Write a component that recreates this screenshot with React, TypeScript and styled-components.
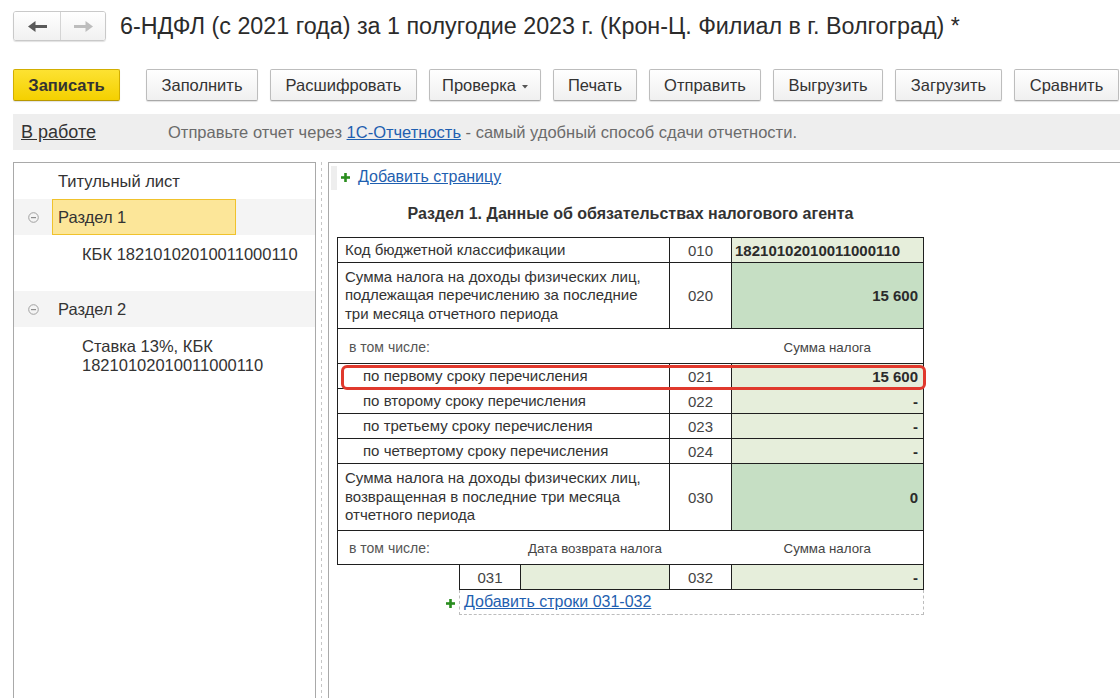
import React from 'react';
import styled, {createGlobalStyle} from 'styled-components';

const GlobalStyle = createGlobalStyle`
  html, body {
    margin: 0;
    padding: 0;
    background: #ffffff;
  }
  body {
    font-family: "Liberation Sans", Arial, sans-serif;
    color: #333333;
  }
`;

const ArrowLeft = ({color}: {color: string}) => (
  <svg width={19} height={11} viewBox="0 0 19 11">
    <polygon points="0,5.5 7.5,0 7.5,11" fill={color} />
    <rect x={6} y={4} width={13} height={3} fill={color} />
  </svg>
);

const ArrowRight = ({color}: {color: string}) => (
  <svg width={19} height={11} viewBox="0 0 19 11">
    <polygon points="19,5.5 11.5,0 11.5,11" fill={color} />
    <rect x={0} y={4} width={13} height={3} fill={color} />
  </svg>
);

const CollapseIcon = () => (
  <svg width={11} height={11} viewBox="0 0 11 11">
    <circle cx={5.5} cy={5.5} r={4.8} fill="none" stroke="#a0a0a0" strokeWidth={1} />
    <rect x={3} y={5} width={5} height={1.2} fill="#8c8c8c" />
  </svg>
);

const PlusIcon = () => (
  <svg width={9} height={9} viewBox="0 0 9 9">
    <rect x={3.2} y={0} width={2.6} height={9} fill="#2a8d1f" />
    <rect x={0} y={3.2} width={9} height={2.6} fill="#2a8d1f" />
  </svg>
);

const DropCaret = () => (
  <svg width={6} height={4} viewBox="0 0 6 4">
    <polygon points="0,0 6,0 3,3.5" fill="#555" />
  </svg>
);

type ButtonSpec = {label: string; width: number; primary?: boolean; caret?: boolean};

const buttons: ButtonSpec[] = [
  {label: 'Записать', width: 107, primary: true},
  {label: 'Заполнить', width: 112},
  {label: 'Расшифровать', width: 147},
  {label: 'Проверка', width: 112, caret: true},
  {label: 'Печать', width: 84},
  {label: 'Отправить', width: 112},
  {label: 'Выгрузить', width: 110},
  {label: 'Загрузить', width: 107},
  {label: 'Сравнить', width: 105},
];

const subRows = [
  {label: 'по первому сроку перечисления', code: '021', value: '15 600'},
  {label: 'по второму сроку перечисления', code: '022', value: '-'},
  {label: 'по третьему сроку перечисления', code: '023', value: '-'},
  {label: 'по четвертому сроку перечисления', code: '024', value: '-'},
];

export default function App() {
  return (
    <Page>
      <GlobalStyle />
      <Header>
        <NavGroup>
          <NavButton $divider>
            <ArrowLeft color="#595959" />
          </NavButton>
          <NavButton>
            <ArrowRight color="#bdbdbd" />
          </NavButton>
        </NavGroup>
        <Title>6-НДФЛ (с 2021 года) за 1 полугодие 2023 г. (Крон-Ц. Филиал в г. Волгоград) *</Title>
      </Header>

      <Toolbar>
        {buttons.map((b) => (
          <ToolButton key={b.label} $primary={b.primary} $width={b.width}>
            {b.label}
            {b.caret && (
              <CaretBox>
                <DropCaret />
              </CaretBox>
            )}
          </ToolButton>
        ))}
      </Toolbar>

      <InfoBar>
        <StatusLink>В работе</StatusLink>
        <InfoText>
          Отправьте отчет через <InfoLink>1С-Отчетность</InfoLink> - самый удобный способ сдачи отчетности.
        </InfoText>
      </InfoBar>

      <Main>
        <TreePanel>
          <TreeRow>
            <TreeLabel $indent={44}>Титульный лист</TreeLabel>
          </TreeRow>
          <TreeRow $shaded>
            <Toggle>
              <CollapseIcon />
            </Toggle>
            <SectionLabel $selected>Раздел 1</SectionLabel>
          </TreeRow>
          <TreeChild>КБК 18210102010011000110</TreeChild>
          <TreeRow $shaded>
            <Toggle>
              <CollapseIcon />
            </Toggle>
            <SectionLabel>Раздел 2</SectionLabel>
          </TreeRow>
          <TreeChild>
            Ставка 13%, КБК
            <br />
            18210102010011000110
          </TreeChild>
        </TreePanel>

        <Splitter />

        <FormPanel>
          <AddPageRow>
            <ScrollStub />
            <PlusIcon />
            <FormLink>Добавить страницу</FormLink>
          </AddPageRow>

          <Sheet>
            <Heading>Раздел 1. Данные об обязательствах налогового агента</Heading>
            <TableWrap>
              <Grid>
                <colgroup>
                  <col style={{width: 122}} />
                  <col style={{width: 61}} />
                  <col style={{width: 149}} />
                  <col style={{width: 62}} />
                  <col style={{width: 192}} />
                </colgroup>
                <tbody>
                  <Row $h={25}>
                    <Label colSpan={3}>Код бюджетной классификации</Label>
                    <Code>010</Code>
                    <Value $tone="light" $align="left">
                      18210102010011000110
                    </Value>
                  </Row>
                  <Row $h={66}>
                    <Label colSpan={3}>
                      Сумма налога на доходы физических лиц,
                      <br />
                      подлежащая перечислению за последние
                      <br />
                      три месяца отчетного периода
                    </Label>
                    <Code>020</Code>
                    <Value $tone="dark">15 600</Value>
                  </Row>
                  <Row $h={35}>
                    <Caption colSpan={4} $first>
                      <SmallLabel>в том числе:</SmallLabel>
                    </Caption>
                    <Caption $last $center>
                      <SubHead>Сумма налога</SubHead>
                    </Caption>
                  </Row>
                  {subRows.map((r) => (
                    <Row key={r.code} $h={25}>
                      <Label colSpan={3} $indent={25}>
                        {r.label}
                      </Label>
                      <Code>{r.code}</Code>
                      <Value $tone="light">{r.value}</Value>
                    </Row>
                  ))}
                  <Row $h={67}>
                    <Label colSpan={3}>
                      Сумма налога на доходы физических лиц,
                      <br />
                      возвращенная в последние три месяца
                      <br />
                      отчетного периода
                    </Label>
                    <Code>030</Code>
                    <Value $tone="dark">0</Value>
                  </Row>
                  <Row $h={34}>
                    <Caption colSpan={2} $first>
                      <SmallLabel>в том числе:</SmallLabel>
                    </Caption>
                    <Caption $center>
                      <SubHead>Дата возврата налога</SubHead>
                    </Caption>
                    <Caption />
                    <Caption $last $center>
                      <SubHead>Сумма налога</SubHead>
                    </Caption>
                  </Row>
                  <Row $h={25}>
                    <Blank />
                    <Code>031</Code>
                    <Value $tone="light" />
                    <Code>032</Code>
                    <Value $tone="light">-</Value>
                  </Row>
                  <Row $h={25}>
                    <Blank>
                      <PlusSlot>
                        <PlusIcon />
                      </PlusSlot>
                    </Blank>
                    <AddCell colSpan={4}>
                      <FormLink>Добавить строки 031-032</FormLink>
                    </AddCell>
                  </Row>
                </tbody>
              </Grid>
              <Highlight />
            </TableWrap>
          </Sheet>
        </FormPanel>
      </Main>
    </Page>
  );
}

const Page = styled.div`
  width: 1120px;
  height: 698px;
  overflow: hidden;
  display: flex;
  flex-direction: column;
  background: #ffffff;
  font-family: "Liberation Sans", Arial, sans-serif;
  color: #333333;
`;

const Header = styled.div`
  display: flex;
  align-items: center;
  padding: 11px 0 0 13px;
  height: 30px;
`;

const NavGroup = styled.div`
  display: flex;
  height: 30px;
  box-sizing: border-box;
  border: 1px solid #c9c9c9;
  border-radius: 3px;
  box-shadow: 0 1px 1px rgba(0, 0, 0, 0.12);
  overflow: hidden;
`;

const NavButton = styled.div<{$divider?: boolean}>`
  width: ${({$divider}) => ($divider ? '46px' : '44px')};
  display: flex;
  align-items: center;
  justify-content: center;
  background: linear-gradient(#ffffff, #f1f1f1);
  border-right: ${({$divider}) => ($divider ? '1px solid #d4d4d4' : 'none')};
`;

const Title = styled.div`
  margin-left: 14px;
  font-size: 23.3px;
  line-height: 30px;
  white-space: nowrap;
  color: #2b2b2b;
`;

const Toolbar = styled.div`
  display: flex;
  gap: 12px;
  padding-left: 13px;
  margin-top: 28px;
  height: 32px;
`;

const ToolButton = styled.div<{$primary?: boolean; $width: number}>`
  width: ${({$width}) => $width}px;
  margin-right: ${({$primary}) => ($primary ? '14px' : '0')};
  box-sizing: border-box;
  height: 32px;
  display: flex;
  align-items: center;
  justify-content: center;
  font-size: 16.5px;
  font-weight: ${({$primary}) => ($primary ? 'bold' : 'normal')};
  color: #333333;
  border-radius: 2px;
  border: 1px solid ${({$primary}) => ($primary ? '#d2ae00' : '#bdbdbd')};
  border-bottom-color: ${({$primary}) => ($primary ? '#b89800' : '#a9a9a9')};
  background: ${({$primary}) =>
    $primary ? 'linear-gradient(#fde232, #f4d000)' : 'linear-gradient(#ffffff, #f0f0f0)'};
  box-shadow: 0 1px 1px rgba(0, 0, 0, 0.12);
  white-space: nowrap;
`;

const CaretBox = styled.span`
  display: inline-flex;
  margin-left: 6px;
  margin-top: 3px;
`;

const InfoBar = styled.div`
  margin: 13px 0 0 13px;
  height: 36px;
  background: #eeeeee;
  display: flex;
  align-items: center;
  padding-left: 8px;
`;

const StatusLink = styled.span`
  font-size: 18px;
  color: #333333;
  text-decoration: underline;
  width: 147px;
`;

const InfoText = styled.span`
  font-size: 16.5px;
  color: #6b6b6b;
  white-space: nowrap;
`;

const InfoLink = styled.span`
  color: #1f5fb0;
  text-decoration: underline;
`;

const Main = styled.div`
  flex: 1;
  min-height: 0;
  display: flex;
  margin-top: 12px;
  padding-left: 13px;
`;

const TreePanel = styled.div`
  width: 303px;
  box-sizing: border-box;
  border: 1px solid #a9a9a9;
  border-bottom: none;
  display: flex;
  flex-direction: column;
`;

const TreeRow = styled.div<{$shaded?: boolean}>`
  height: 36px;
  display: flex;
  align-items: center;
  background: ${({$shaded}) => ($shaded ? '#f4f4f4' : 'transparent')};
`;

const TreeLabel = styled.span<{$indent: number}>`
  padding-left: ${({$indent}) => $indent}px;
  font-size: 16.5px;
  color: #333333;
`;

const Toggle = styled.div`
  width: 38px;
  display: flex;
  justify-content: center;
  align-items: center;
`;

const SectionLabel = styled.div<{$selected?: boolean}>`
  width: 184px;
  height: 36px;
  box-sizing: border-box;
  display: flex;
  align-items: center;
  padding-left: 5px;
  font-size: 16.5px;
  color: #333333;
  background: ${({$selected}) => ($selected ? '#fce699' : 'transparent')};
  border: 1px solid ${({$selected}) => ($selected ? '#f0c22c' : 'transparent')};
`;

const TreeChild = styled.div`
  height: 56px;
  box-sizing: border-box;
  padding: 10px 0 0 68px;
  font-size: 16.5px;
  line-height: 19px;
  color: #333333;
  white-space: nowrap;
`;

const Splitter = styled.div`
  width: 12px;
  background: repeating-linear-gradient(to bottom, #c6c6c6 0 3px, transparent 3px 6px) no-repeat 5px 0 / 1px 100%;
`;

const FormPanel = styled.div`
  flex: 1;
  border-left: 1px solid #a9a9a9;
  border-top: 1px solid #a9a9a9;
  padding-left: 8px;
  display: flex;
  flex-direction: column;
`;

const AddPageRow = styled.div`
  height: 28px;
  margin-left: -6px;
  display: flex;
  align-items: center;
  gap: 4px;
`;

const ScrollStub = styled.div`
  width: 6px;
  height: 24px;
  margin-top: 2px;
  background: #eeeeee;
`;

const FormLink = styled.span`
  margin-left: 4px;
  font-size: 16px;
  color: #1f5fb0;
  text-decoration: underline;
  white-space: nowrap;
`;

const Sheet = styled.div`
  width: 587px;
  display: flex;
  flex-direction: column;
`;

const Heading = styled.div`
  margin-top: 13px;
  height: 20px;
  line-height: 20px;
  text-align: center;
  font-size: 16px;
  font-weight: bold;
  color: #333333;
  white-space: nowrap;
`;

const TableWrap = styled.div`
  position: relative;
  margin-top: 13px;
`;

const Grid = styled.table`
  width: 587px;
  table-layout: fixed;
  border-collapse: collapse;
  font-size: 15px;
  color: #333333;
`;

const Row = styled.tr<{$h: number}>`
  height: ${({$h}) => $h}px;
`;

const cellBorder = '1px solid #1f1f1f';

const Label = styled.td<{$indent?: number}>`
  border: ${cellBorder};
  padding: 0 4px 0 ${({$indent}) => $indent ?? 7}px;
  line-height: 18.5px;
  vertical-align: middle;
  white-space: nowrap;
`;

const Code = styled.td`
  border: ${cellBorder};
  padding: 0;
  text-align: center;
  color: #444444;
`;

const Value = styled.td<{$tone: 'light' | 'dark'; $align?: 'left' | 'right'}>`
  border: ${cellBorder};
  padding: 0 5px 0 3px;
  text-align: ${({$align}) => $align ?? 'right'};
  font-weight: bold;
  color: #2b2b2b;
  background: ${({$tone}) => ($tone === 'dark' ? '#c6dfc4' : '#e6eedb')};
  white-space: nowrap;
`;

const Caption = styled.td<{$first?: boolean; $last?: boolean; $center?: boolean}>`
  border-top: ${cellBorder};
  border-bottom: ${cellBorder};
  border-left: ${({$first}) => ($first ? cellBorder : 'none')};
  border-right: ${({$last}) => ($last ? cellBorder : 'none')};
  padding: 0 0 0 ${({$first}) => ($first ? '11px' : '0')};
  text-align: ${({$center}) => ($center ? 'center' : 'left')};
  white-space: nowrap;
`;

const SmallLabel = styled.span`
  font-size: 14px;
  color: #555555;
`;

const SubHead = styled.span`
  font-size: 13.3px;
  color: #444444;
`;

const Blank = styled.td`
  border: none;
  padding: 0;
`;

const PlusSlot = styled.div`
  display: flex;
  justify-content: flex-end;
  padding-right: 4px;
  margin-top: 2px;
`;

const AddCell = styled.td`
  border-left: 1px dashed #bdbdbd;
  border-right: 1px dashed #bdbdbd;
  border-bottom: 1px dashed #bdbdbd;
  padding: 0;
`;

const Highlight = styled.div`
  position: absolute;
  left: 4px;
  top: 128px;
  width: 585px;
  height: 25px;
  box-sizing: border-box;
  border: 3px solid #e0392d;
  border-radius: 6px;
  pointer-events: none;
`;
